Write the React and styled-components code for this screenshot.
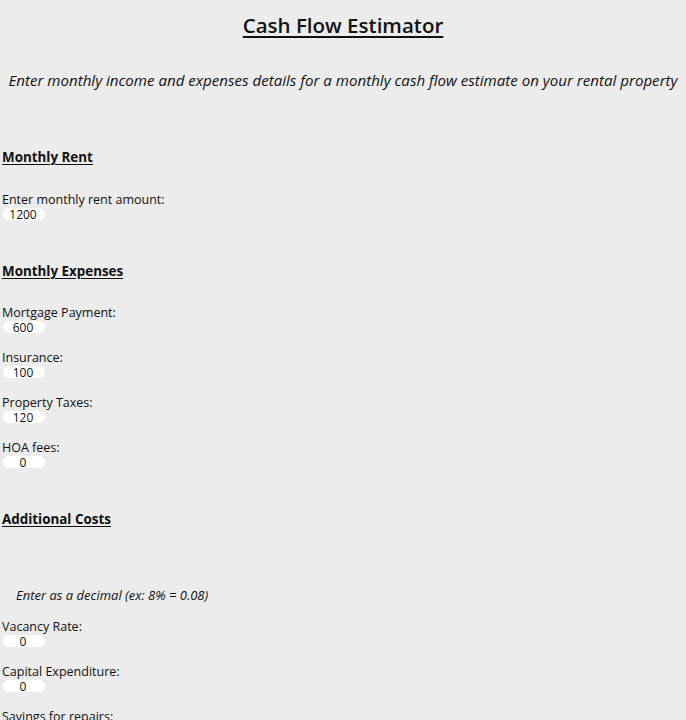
import React from 'react';
import styled, { createGlobalStyle } from 'styled-components';

const GlobalStyle = createGlobalStyle`
  html, body {
    margin: 0;
    padding: 0;
    background-color: #ececec;
  }
  body {
    font-family: "Open Sans", "Noto Sans", sans-serif;
    color: #111;
  }
`;

const Page = styled.div`
  padding: 0 2px;
`;

const Title = styled.h1`
  margin: 0;
  padding-top: 11px;
  text-align: center;
  font-size: 20.5px;
  font-weight: 600;
  line-height: 28px;
  text-decoration: underline;
  text-underline-offset: 3px;
`;

const Subtitle = styled.p`
  margin: 31px 0 0;
  text-align: center;
  font-size: 15.1px;
  font-style: italic;
  line-height: 20px;
`;

const Section = styled.section`
  margin-top: ${(p) => p.$top}px;
`;

const SectionTitle = styled.h3`
  margin: 0;
  font-size: 13.4px;
  font-weight: 700;
  line-height: 20px;
  text-decoration: underline;
  text-underline-offset: 2px;
`;

const Note = styled.p`
  margin: ${(p) => p.$top}px 0 0 14px;
  font-size: 13px;
  font-style: italic;
  line-height: 16px;
`;

const Field = styled.div`
  display: flex;
  flex-direction: column;
  align-items: flex-start;
  margin-top: ${(p) => p.$top}px;
`;

const Label = styled.label`
  font-size: 12.5px;
  line-height: 16px;
`;

const Input = styled.input`
  box-sizing: border-box;
  width: 42px;
  height: 12px;
  margin-left: 1px;
  padding: 0;
  border: none;
  border-radius: 6px;
  background: #fff;
  font-family: "Open Sans", "Noto Sans", sans-serif;
  font-size: 12px;
  line-height: 12px;
  color: #111;
  text-align: center;
  text-indent: -2px;
  outline: none;
`;

function InputField({ label, value, top }) {
  return (
    <Field $top={top}>
      <Label>{label}</Label>
      <Input type="text" defaultValue={value} />
    </Field>
  );
}

export default function App() {
  return (
    <Page>
      <GlobalStyle />
      <Title>Cash Flow Estimator</Title>
      <Subtitle>
        Enter monthly income and expenses details for a monthly cash flow estimate on your rental property
      </Subtitle>

      <Section $top={57}>
        <SectionTitle>Monthly Rent</SectionTitle>
        <InputField top={25} label="Enter monthly rent amount:" value="1200" />
      </Section>

      <Section $top={41}>
        <SectionTitle>Monthly Expenses</SectionTitle>
        <InputField top={24} label="Mortgage Payment:" value="600" />
        <InputField top={17} label="Insurance:" value="100" />
        <InputField top={17} label="Property Taxes:" value="120" />
        <InputField top={17} label="HOA fees:" value="0" />
      </Section>

      <Section $top={41}>
        <SectionTitle>Additional Costs</SectionTitle>
        <Note $top={58}>Enter as a decimal (ex: 8% = 0.08)</Note>
        <InputField top={16} label="Vacancy Rate:" value="0" />
        <InputField top={17} label="Capital Expenditure:" value="0" />
        <InputField top={17} label="Savings for repairs:" value="0" />
      </Section>
    </Page>
  );
}
